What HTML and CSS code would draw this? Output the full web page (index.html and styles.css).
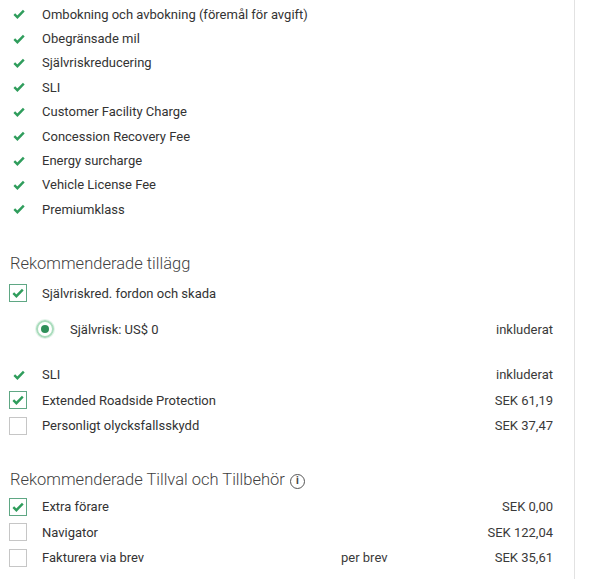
FILE: index.html
```html
<!DOCTYPE html>
<html lang="sv">
<head>
<meta charset="utf-8">
<title>Tillägg</title>
<link rel="stylesheet" href="styles.css">
</head>
<body>
<div class="panel">
  <ul class="included">
    <li class="inc-row"><span class="tick"><svg viewBox="0 0 12 10" width="12" height="10"><path d="M1.3 5.2 L4.4 8.2 L10.8 1.6"/></svg></span><span class="first-text">Ombokning och avbokning (föremål för avgift)</span></li>
    <li class="inc-row"><span class="tick"><svg viewBox="0 0 12 10" width="12" height="10"><path d="M1.3 5.2 L4.4 8.2 L10.8 1.6"/></svg></span><span>Obegränsade mil</span></li>
    <li class="inc-row"><span class="tick"><svg viewBox="0 0 12 10" width="12" height="10"><path d="M1.3 5.2 L4.4 8.2 L10.8 1.6"/></svg></span><span>Självriskreducering</span></li>
    <li class="inc-row"><span class="tick"><svg viewBox="0 0 12 10" width="12" height="10"><path d="M1.3 5.2 L4.4 8.2 L10.8 1.6"/></svg></span><span>SLI</span></li>
    <li class="inc-row"><span class="tick"><svg viewBox="0 0 12 10" width="12" height="10"><path d="M1.3 5.2 L4.4 8.2 L10.8 1.6"/></svg></span><span>Customer Facility Charge</span></li>
    <li class="inc-row"><span class="tick"><svg viewBox="0 0 12 10" width="12" height="10"><path d="M1.3 5.2 L4.4 8.2 L10.8 1.6"/></svg></span><span>Concession Recovery Fee</span></li>
    <li class="inc-row"><span class="tick"><svg viewBox="0 0 12 10" width="12" height="10"><path d="M1.3 5.2 L4.4 8.2 L10.8 1.6"/></svg></span><span>Energy surcharge</span></li>
    <li class="inc-row"><span class="tick"><svg viewBox="0 0 12 10" width="12" height="10"><path d="M1.3 5.2 L4.4 8.2 L10.8 1.6"/></svg></span><span>Vehicle License Fee</span></li>
    <li class="inc-row"><span class="tick"><svg viewBox="0 0 12 10" width="12" height="10"><path d="M1.3 5.2 L4.4 8.2 L10.8 1.6"/></svg></span><span>Premiumklass</span></li>
  </ul>

  <h2 class="section-title first">Rekommenderade tillägg</h2>
  <div class="opt-row">
    <span class="box checked"><svg viewBox="0 0 12 10" width="12" height="10"><path d="M1.3 5.2 L4.4 8.2 L10.8 1.6"/></svg></span>
    <span class="label">Självriskred. fordon och skada</span>
    <span class="unit"></span>
    <span class="value"></span>
  </div>
  <div class="radio-row">
    <span class="radio"><span class="dot"></span></span>
    <span class="label">Självrisk: US$ 0</span>
    <span class="value">inkluderat</span>
  </div>
  <div class="opt-row">
    <span class="tick"><svg viewBox="0 0 12 10" width="12" height="10"><path d="M1.3 5.2 L4.4 8.2 L10.8 1.6"/></svg></span>
    <span class="label">SLI</span>
    <span class="unit"></span>
    <span class="value">inkluderat</span>
  </div>
  <div class="opt-row">
    <span class="box checked"><svg viewBox="0 0 12 10" width="12" height="10"><path d="M1.3 5.2 L4.4 8.2 L10.8 1.6"/></svg></span>
    <span class="label">Extended Roadside Protection</span>
    <span class="unit"></span>
    <span class="value">SEK 61,19</span>
  </div>
  <div class="opt-row">
    <span class="box"></span>
    <span class="label">Personligt olycksfallsskydd</span>
    <span class="unit"></span>
    <span class="value">SEK 37,47</span>
  </div>

  <h2 class="section-title second">Rekommenderade Tillval och Tillbehör <span class="info">i</span></h2>
  <div class="opt-row">
    <span class="box checked"><svg viewBox="0 0 12 10" width="12" height="10"><path d="M1.3 5.2 L4.4 8.2 L10.8 1.6"/></svg></span>
    <span class="label">Extra förare</span>
    <span class="unit"></span>
    <span class="value">SEK 0,00</span>
  </div>
  <div class="opt-row">
    <span class="box"></span>
    <span class="label">Navigator</span>
    <span class="unit"></span>
    <span class="value">SEK 122,04</span>
  </div>
  <div class="opt-row">
    <span class="box"></span>
    <span class="label">Fakturera via brev</span>
    <span class="unit">per brev</span>
    <span class="value">SEK 35,61</span>
  </div>
</div>
</body>
</html>
```

FILE: styles.css
```css
html, body {
  margin: 0;
  padding: 0;
  background: #ffffff;
}

body {
  font-family: Roboto, "Liberation Sans", Arial, sans-serif;
  font-size: 13px;
  color: #333333;
}

.panel {
  width: 575px;
  min-height: 579px;
  box-sizing: border-box;
  padding: 2px 21px 0 9px;
  border-right: 1px solid #e2e2e2;
}

.included {
  list-style: none;
  margin: 0;
  padding: 0;
}

.inc-row {
  display: flex;
  align-items: center;
  height: 24.4px;
}

.tick {
  width: 33px;
  display: flex;
  align-items: center;
  padding-left: 4px;
  box-sizing: border-box;
}

.tick svg path,
.box svg path {
  fill: none;
  stroke: #2f9d5c;
  stroke-width: 2.4;
  stroke-linecap: butt;
  stroke-linejoin: miter;
}

.section-title {
  margin: 0;
  height: 28px;
  line-height: 28px;
  font-size: 16.5px;
  font-weight: 300;
  color: #3f3f3f;
  padding-left: 1px;
  display: flex;
  align-items: center;
}

.section-title.first {
  margin-top: 28px;
  margin-bottom: 3px;
}

.section-title.second {
  margin-top: 27.5px;
}

.info {
  display: inline-flex;
  align-items: center;
  justify-content: center;
  width: 13px;
  height: 13px;
  border: 1.3px solid #555;
  border-radius: 50%;
  font-size: 10.5px;
  font-weight: 700;
  line-height: 1;
  color: #444;
  margin-left: 5px;
  margin-top: 2px;
}

.opt-row {
  display: grid;
  grid-template-columns: 33px 1fr 122px 90px;
  align-items: center;
  height: 25.5px;
}

.box {
  width: 18px;
  height: 18px;
  box-sizing: border-box;
  border: 1px solid #c6c6c6;
  display: flex;
  align-items: center;
  justify-content: center;
  background: #fff;
}

.box.checked {
  border-color: #5fa784;
}

.value {
  text-align: right;
  color: #3a3a3a;
}

.unit {
  color: #3a3a3a;
}

.radio-row {
  display: flex;
  align-items: center;
  height: 26px;
  padding: 10px 0 20px 27px;
}

.radio {
  width: 18px;
  height: 18px;
  box-sizing: border-box;
  border: 2px solid #a9dcbc;
  border-radius: 50%;
  display: flex;
  align-items: center;
  justify-content: center;
  box-shadow: 0 0 0 1px #e3f3e9;
}

.dot {
  width: 8px;
  height: 8px;
  border-radius: 50%;
  background: #2e8f59;
}

.radio-row .label {
  flex: 1;
  margin-left: 16px;
}
```
